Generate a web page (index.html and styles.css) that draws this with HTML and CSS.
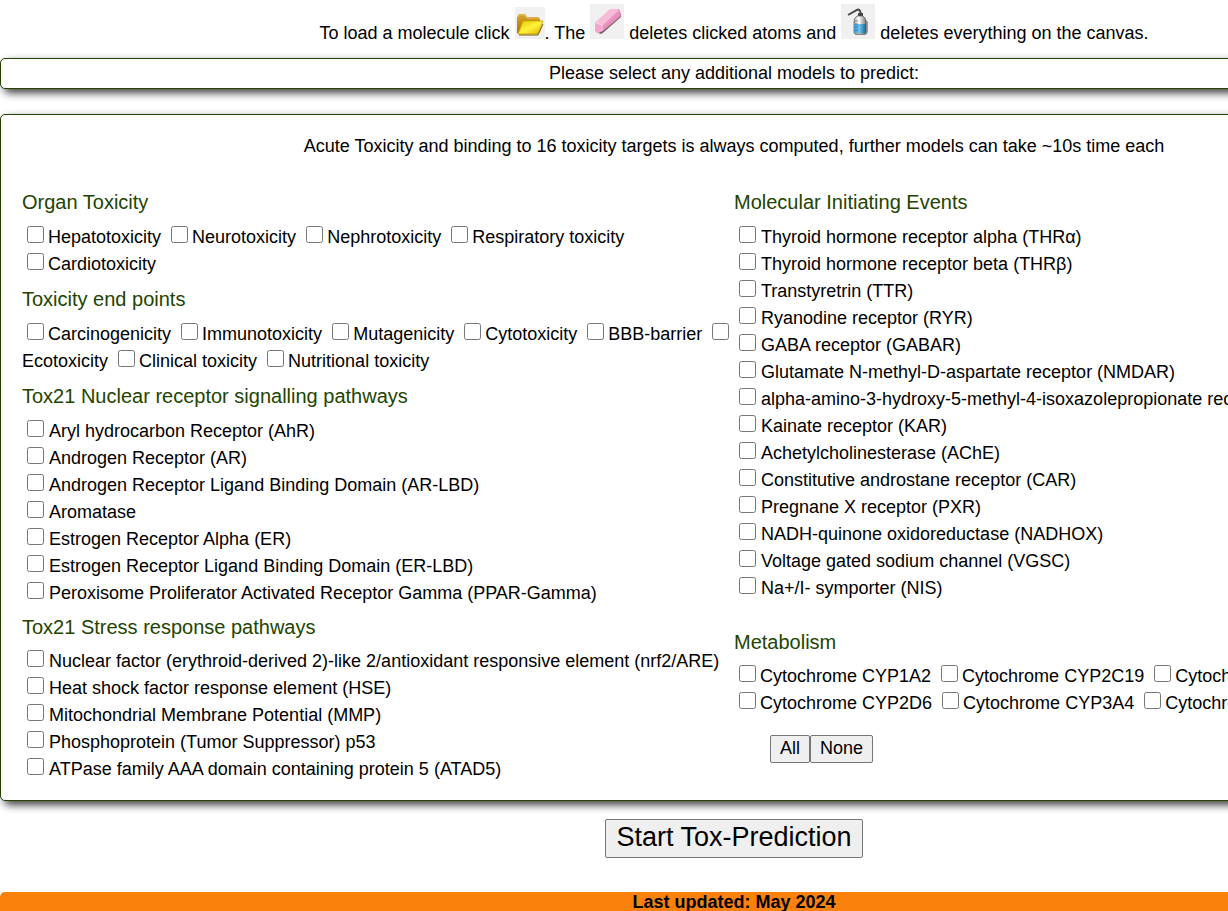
FILE: index.html
```html
<!DOCTYPE html>
<html lang="en">
<head>
<meta charset="utf-8">
<title>Tox-Prediction</title>
<link rel="stylesheet" href="styles.css">
</head>
<body>
<main class="page">
  <p class="intro">To load a molecule click
    <svg class="icon icon-folder" viewBox="0 0 30 32" role="img" aria-label="Open">
      <defs>
        <linearGradient id="back" x1="0" y1="0" x2="0" y2="1"><stop offset="0" stop-color="#d9a62c"/><stop offset="1" stop-color="#a87400"/></linearGradient>
        <linearGradient id="front" x1="0" y1="0" x2="1" y2="1"><stop offset="0" stop-color="#e6c800"/><stop offset=".5" stop-color="#fff23a"/><stop offset="1" stop-color="#d8b400"/></linearGradient>
      </defs>
      <rect width="30" height="32" fill="#f0f0f0"/>
      <path d="M2 26V10l2-3h6l2 3h11l2 2v6L7 27z" fill="url(#back)"/>
      <path d="M3 10l2-2h5l2 3h12" fill="none" stroke="#e6c06a"/>
      <path d="M8 14h20l-5 13H3z" fill="url(#front)" stroke="#c9a100" stroke-width=".8"/>
      <path d="M4 28h19l5-11" fill="none" stroke="#7d6000"/>
    </svg>. The
    <svg class="icon icon-eraser" viewBox="0 0 34 35" role="img" aria-label="Eraser">
      <defs>
        <linearGradient id="rubber" x1="0" y1="0" x2="1" y2="1"><stop offset=".2" stop-color="#f9c3dc"/><stop offset=".6" stop-color="#e68bb8"/><stop offset="1" stop-color="#a9557f"/></linearGradient>
      </defs>
      <rect width="34" height="35" fill="#f0f0f0"/>
      <path d="M6 26l4 4q2 0 4-2L31 13V9z" fill="#49363f" opacity=".75"/>
      <path d="M5 19L19 6q2-1 4-1h5q2 0 2 2l1 5-18 15-5 2q-3-1-3-4z" fill="url(#rubber)"/>
      <path d="M5 19l6 2 1 6-4 2q-3-1-3-4z" fill="#f3a5ca"/>
      <path d="M5 19L19 6q2-1 4-1h5L12 21z" fill="#f8bbd7"/>
      <path d="M6 19l6 2L28 6M12 21v6" fill="none" stroke="#ffd8e9" stroke-width=".8"/>
    </svg>
    deletes clicked atoms and
    <svg class="icon icon-bottle" viewBox="0 0 34 35" role="img" aria-label="Clear">
      <defs>
        <linearGradient id="glass" x1="0" y1="0" x2="1" y2="0"><stop offset="0" stop-color="#aaa"/><stop offset=".4" stop-color="#fff"/><stop offset="1" stop-color="#777"/></linearGradient>
        <linearGradient id="water" x1="0" y1="0" x2="1" y2="0"><stop offset="0" stop-color="#3d97cd"/><stop offset=".45" stop-color="#6cc4f3"/><stop offset="1" stop-color="#17648f"/></linearGradient>
      </defs>
      <rect width="34" height="35" fill="#f0f0f0"/>
      <path d="M14 31h11l2-3V18l-3-3z" fill="#666" opacity=".6"/>
      <path d="M7 11l9-5q2-1 3 1l1 3" fill="none" stroke="#4a4a4a" stroke-width="2"/>
      <path d="M17 9h5v3h-5z" fill="#444"/>
      <path d="M16 12h6q3 2 3 5v11q0 2-2 2h-8q-2 0-2-2V17q0-3 3-5z" fill="url(#glass)" stroke="#555" stroke-width=".7"/>
      <path d="M13 20h12v8q0 1-1 1H14q-1 0-1-1z" fill="url(#water)"/>
      <path d="M14 17h3M14 20h3M14 23h3M14 26h3" stroke="#456" stroke-width=".6"/>
    </svg>
    deletes everything on the canvas.</p>

  <section class="panel banner">Please select any additional models to predict:</section>

  <form class="models">
    <section class="panel choices">
      <p class="note">Acute Toxicity and binding to 16 toxicity targets is always computed, further models can take ~10s time each</p>
      <div class="columns">
        <div class="column">
          <h2>Organ Toxicity</h2>
          <div>
            <label><input type="checkbox">Hepatotoxicity</label>
            <label><input type="checkbox">Neurotoxicity</label>
            <label><input type="checkbox">Nephrotoxicity</label>
            <label><input type="checkbox">Respiratory toxicity</label><br>
            <label><input type="checkbox">Cardiotoxicity</label>
          </div>
          <h2>Toxicity end points</h2>
          <div>
            <label><input type="checkbox">Carcinogenicity</label>
            <label><input type="checkbox">Immunotoxicity</label>
            <label><input type="checkbox">Mutagenicity</label>
            <label><input type="checkbox">Cytotoxicity</label>
            <label><input type="checkbox">BBB-barrier</label>
            <label><input type="checkbox">Ecotoxicity</label>
            <label><input type="checkbox">Clinical toxicity</label>
            <label><input type="checkbox">Nutritional toxicity</label>
          </div>
          <h2>Tox21 Nuclear receptor signalling pathways</h2>
          <ul>
            <li><label><input type="checkbox">Aryl hydrocarbon Receptor (AhR)</label></li>
            <li><label><input type="checkbox">Androgen Receptor (AR)</label></li>
            <li><label><input type="checkbox">Androgen Receptor Ligand Binding Domain (AR-LBD)</label></li>
            <li><label><input type="checkbox">Aromatase</label></li>
            <li><label><input type="checkbox">Estrogen Receptor Alpha (ER)</label></li>
            <li><label><input type="checkbox">Estrogen Receptor Ligand Binding Domain (ER-LBD)</label></li>
            <li><label><input type="checkbox">Peroxisome Proliferator Activated Receptor Gamma (PPAR-Gamma)</label></li>
          </ul>
          <h2>Tox21 Stress response pathways</h2>
          <ul>
            <li><label><input type="checkbox">Nuclear factor (erythroid-derived 2)-like 2/antioxidant responsive element (nrf2/ARE)</label></li>
            <li><label><input type="checkbox">Heat shock factor response element (HSE)</label></li>
            <li><label><input type="checkbox">Mitochondrial Membrane Potential (MMP)</label></li>
            <li><label><input type="checkbox">Phosphoprotein (Tumor Suppressor) p53</label></li>
            <li><label><input type="checkbox">ATPase family AAA domain containing protein 5 (ATAD5)</label></li>
          </ul>
        </div>
        <div class="column">
          <h2>Molecular Initiating Events</h2>
          <ul>
            <li><label><input type="checkbox">Thyroid hormone receptor alpha (THRα)</label></li>
            <li><label><input type="checkbox">Thyroid hormone receptor beta (THRβ)</label></li>
            <li><label><input type="checkbox">Transtyretrin (TTR)</label></li>
            <li><label><input type="checkbox">Ryanodine receptor (RYR)</label></li>
            <li><label><input type="checkbox">GABA receptor (GABAR)</label></li>
            <li><label><input type="checkbox">Glutamate N-methyl-D-aspartate receptor (NMDAR)</label></li>
            <li><label><input type="checkbox">alpha-amino-3-hydroxy-5-methyl-4-isoxazolepropionate receptor (AMPAR)</label></li>
            <li><label><input type="checkbox">Kainate receptor (KAR)</label></li>
            <li><label><input type="checkbox">Achetylcholinesterase (AChE)</label></li>
            <li><label><input type="checkbox">Constitutive androstane receptor (CAR)</label></li>
            <li><label><input type="checkbox">Pregnane X receptor (PXR)</label></li>
            <li><label><input type="checkbox">NADH-quinone oxidoreductase (NADHOX)</label></li>
            <li><label><input type="checkbox">Voltage gated sodium channel (VGSC)</label></li>
            <li><label><input type="checkbox">Na+/I- symporter (NIS)</label></li>
          </ul>
          <h2 class="spaced">Metabolism</h2>
          <div>
            <label><input type="checkbox">Cytochrome CYP1A2</label>
            <label><input type="checkbox">Cytochrome CYP2C19</label>
            <label><input type="checkbox">Cytochrome CYP2C9</label><br>
            <label><input type="checkbox">Cytochrome CYP2D6</label>
            <label><input type="checkbox">Cytochrome CYP3A4</label>
            <label><input type="checkbox">Cytochrome CYP2E1</label>
          </div>
          <div class="bulk"><button type="button">All</button><button type="button">None</button></div>
        </div>
      </div>
    </section>
    <button class="start" type="button">Start Tox-Prediction</button>
  </form>

  <footer class="footer">Last updated: May 2024</footer>
</main>
</body>
</html>
```

FILE: styles.css
```css
* { box-sizing: border-box; }

body {
  margin: 0;
  overflow: hidden;
  background: #fff;
  color: #000;
  font: 18px/27px "Liberation Sans", Arial, sans-serif;
}

/* The page runs wider than the window */
.page { width: calc(100% + 240px); }

.intro {
  margin: 0;
  padding-top: 4px;
  height: 58px;
  text-align: center;
}
.icon { vertical-align: baseline; }
.icon-folder { width: 30px; height: 32px; }
.icon-eraser, .icon-bottle { width: 34px; height: 35px; }

.panel {
  border: 1px solid #224400;
  border-radius: 5px;
  background: #fff;
  box-shadow: 4px 4px 8px rgba(0, 0, 0, .75);
}
.banner {
  margin-bottom: 25px;
  padding: 1px 0;
  text-align: center;
}
.choices { padding: 18px 21px 17px; }

.note { margin: 0 0 29px; text-align: center; }

.columns { display: grid; grid-template-columns: 1fr 1fr; }
.column { min-width: 0; }

h2 {
  margin: 8px 0;
  color: #224400;
  font-size: 20px;
  font-weight: normal;
  line-height: 27px;
}
h2:first-child { margin-top: 0; }
ul + h2 { margin-top: 7px; margin-bottom: 7px; }
h2.spaced { margin-top: 27px; }

ul { margin: 0; padding: 0; list-style: none; }

input {
  width: 17px;
  height: 17px;
  margin: 0 4px 2px 5px;
  vertical-align: baseline;
}
li input { margin-right: 5px; }

button {
  border: 1px solid #767676;
  border-radius: 2px;
  background: #efefef;
  color: #000;
  font-family: inherit;
}
.bulk { display: flex; margin-top: 18px; padding-left: 36px; }
.bulk button { height: 28px; padding: 0 9px 2px; font-size: 18px; }

.models { display: flex; flex-direction: column; }
.start {
  align-self: center;
  height: 39px;
  margin: 18px 0 34px;
  padding: 0 10px 2px;
  font-size: 27px;
}

.footer {
  padding-bottom: 8px;
  border-radius: 5px;
  background: #fa820c;
  font-weight: bold;
  line-height: 20px;
  text-align: center;
}
```
